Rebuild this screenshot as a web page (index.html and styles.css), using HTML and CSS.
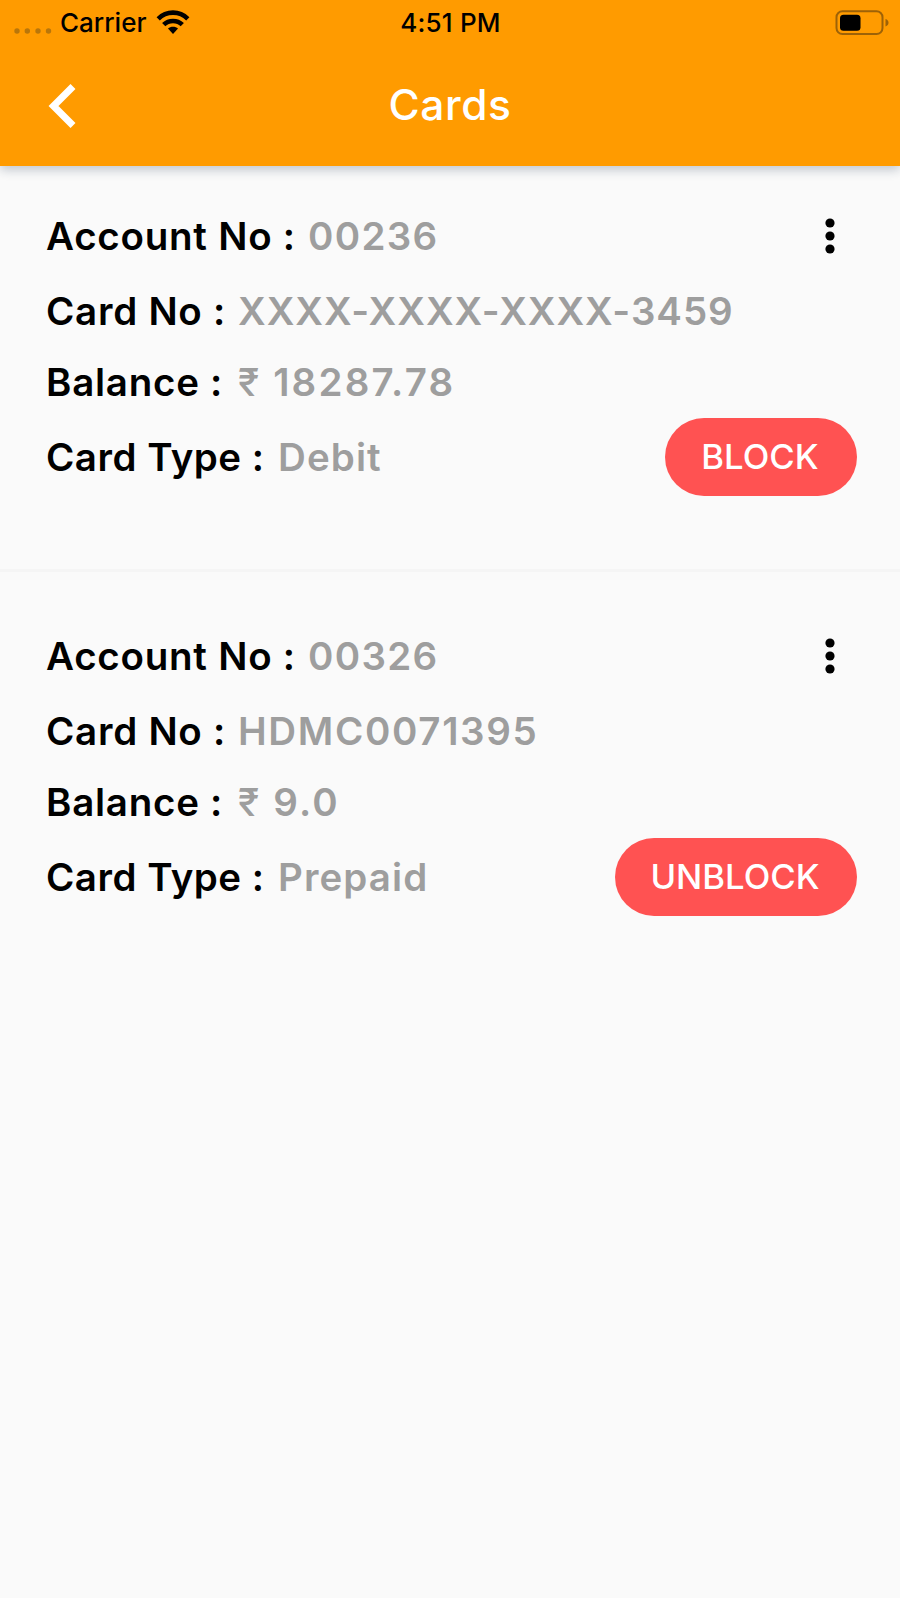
FILE: index.html
```html
<!DOCTYPE html>
<html lang="en">
<head>
<meta charset="utf-8">
<title>Cards</title>
<link rel="stylesheet" href="styles.css">
</head>
<body>
<header class="header">
  <div class="status">
    <div class="network">
      <svg class="signal" width="38" height="6" viewBox="0 0 38 6"><circle cx="3" cy="3" r="2.7"/><circle cx="13.3" cy="3" r="2.7"/><circle cx="24" cy="3" r="2.7"/><circle cx="34.5" cy="3" r="2.7"/></svg>
      <span class="carrier">Carrier</span>
      <svg class="wifi" width="34" height="26" viewBox="0 0 34 26"><g fill="none" stroke="#000" stroke-width="4.6"><path d="M2.2 9.8C10.5 1.6 23.5 1.6 31.8 9.8"/><path d="M7.7 15.7C12.8 10.7 21.2 10.7 26.3 15.7"/></g><path d="M12 19.5C14.5 17.2 19.5 17.2 22 19.5L17 25Z"/></svg>
    </div>
    <time class="time">4:51 PM</time>
    <svg class="battery" width="54" height="26" viewBox="0 0 54 26"><rect x="1.5" y="1.3" width="46" height="22.8" rx="6" fill="none" stroke="#9d6207" stroke-width="2"/><rect x="5" y="4.7" width="20.5" height="16" rx="3.5"/><path d="M50.5 9Q53.5 10 53.5 12.7T50.5 16.4Z" fill="#9d6207"/></svg>
  </div>
  <nav class="appbar">
    <svg class="back" width="28" height="46" viewBox="0 0 28 46"><path d="M25 3.5L5.5 23L25 42.5" fill="none" stroke="#fff" stroke-width="7"/></svg>
    <h1 class="title">Cards</h1>
  </nav>
</header>
<main>
  <section class="card">
    <div class="row"><span class="label account">Account No :</span><span class="value digits">00236</span>
      <svg class="menu" width="10" height="36" viewBox="0 0 10 36"><circle cx="5" cy="5" r="4.6"/><circle cx="5" cy="18" r="4.6"/><circle cx="5" cy="31" r="4.6"/></svg></div>
    <div class="row number"><span class="label card-no">Card No :</span><span class="value masked">XXXX-XXXX-XXXX-3459</span></div>
    <div class="row balance"><span class="label balance-label">Balance :</span><span class="value amount"><span class="rupee">₹</span> 18287.78</span></div>
    <div class="row type"><span class="label card-type">Card Type :</span><span class="value">Debit</span><button class="action block">BLOCK</button></div>
  </section>
  <section class="card">
    <div class="row"><span class="label account">Account No :</span><span class="value digits">00326</span>
      <svg class="menu" width="10" height="36" viewBox="0 0 10 36"><circle cx="5" cy="5" r="4.6"/><circle cx="5" cy="18" r="4.6"/><circle cx="5" cy="31" r="4.6"/></svg></div>
    <div class="row number"><span class="label card-no">Card No :</span><span class="value code">HDMC0071395</span></div>
    <div class="row balance"><span class="label balance-label">Balance :</span><span class="value amount"><span class="rupee">₹</span> 9.0</span></div>
    <div class="row type"><span class="label card-type">Card Type :</span><span class="value">Prepaid</span><button class="action unblock">UNBLOCK</button></div>
  </section>
</main>
</body>
</html>
```
FILE: styles.css
```css
* { box-sizing: border-box; }
body { margin: 0; min-height: 1598px; background: #fafafa; color: #000; font-family: Inter, "Liberation Sans", sans-serif; }
svg { display: block; flex: none; }
.header { position: relative; height: 166px; background: #ff9b00; box-shadow: 0 4px 10px rgba(20, 40, 70, .24); }
.status { display: grid; grid-template-columns: 1fr auto 1fr; align-items: center; height: 45px; padding: 0 11px 0 14px; }
.network { display: flex; align-items: center; }
.signal { margin-top: 16px; fill: #b9760a; }
.carrier { width: 88px; margin-left: 8px; font-size: 26px; font-weight: 500; white-space: nowrap; }
.wifi { margin-left: 8px; margin-top: -1px; }
.time { margin-right: 2px; font-size: 26px; font-weight: 500; letter-spacing: .2px; }
.battery { justify-self: end; }
.appbar { display: grid; grid-template-columns: 1fr auto 1fr; align-items: center; height: 121px; padding: 0 48px; }
.title { margin: 0; padding-bottom: 2px; color: #fff; font-size: 42.5px; font-weight: 500; line-height: 60px; letter-spacing: .6px; }
.card { padding: 47px 43px 71px 46px; border-bottom: 3px solid #f5f5f5; }
.card:first-child { padding-top: 33px; }
.card:last-child { border-bottom: 0; }
.row { display: flex; align-items: center; height: 74px; font-size: 38.5px; font-weight: 600; white-space: nowrap; }
.number { height: 75px; }
.balance { height: 67px; }
.type { height: 83px; }
.label { flex: none; letter-spacing: .75px; }
.account { width: 262px; }
.card-no { width: 192px; }
.balance-label { width: 192px; }
.card-type { width: 232px; letter-spacing: .5px; }
.value { color: #9e9e9e; letter-spacing: 1.1px; }
.digits { letter-spacing: 1.3px; }
.masked { letter-spacing: .95px; }
.code { letter-spacing: 1.65px; }
.amount { letter-spacing: 2.2px; }
.rupee { margin-right: 2px; font-weight: 500; letter-spacing: 0; }
.menu { margin-left: auto; margin-right: 22px; }
.action { height: 78px; margin-left: auto; padding: 0 2px 1px 0; border: 0; border-radius: 39px; background: #ff5252; color: #fff; font: 500 34.7px Inter, "Liberation Sans", sans-serif; }
.block { width: 192px; }
.unblock { width: 242px; }
```
